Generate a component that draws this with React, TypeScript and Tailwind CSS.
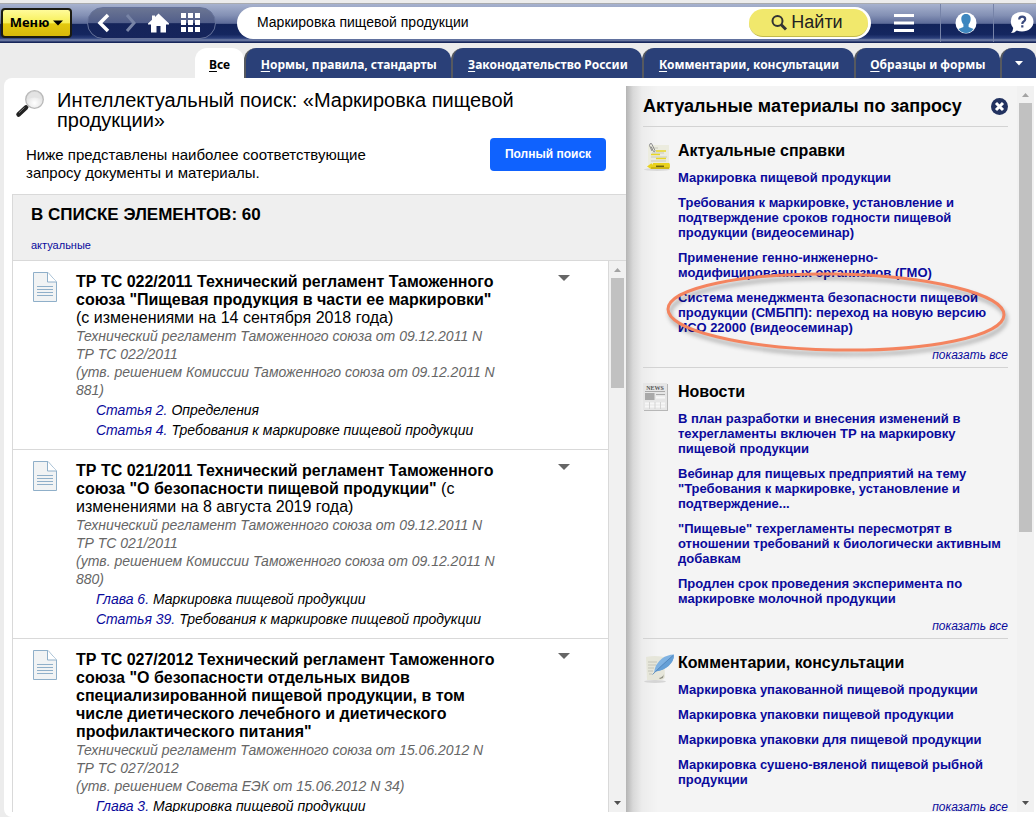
import { ReactNode } from "react";

type Doc = {
  title: string;
  note?: string;
  lines: string[];
  parts: { ref: string; text: string }[];
};

const docs: Doc[] = [
  {
    title: 'ТР ТС 022/2011 Технический регламент Таможенного союза "Пищевая продукция в части ее маркировки"',
    note: "(с изменениями на 14 сентября 2018 года)",
    lines: [
      "Технический регламент Таможенного союза от 09.12.2011 N ТР ТС 022/2011",
      "(утв. решением Комиссии Таможенного союза от 09.12.2011 N 881)",
    ],
    parts: [
      { ref: "Статья 2.", text: "Определения" },
      { ref: "Статья 4.", text: "Требования к маркировке пищевой продукции" },
    ],
  },
  {
    title: 'ТР ТС 021/2011 Технический регламент Таможенного союза "О безопасности пищевой продукции"',
    note: "(с изменениями на 8 августа 2019 года)",
    lines: [
      "Технический регламент Таможенного союза от 09.12.2011 N ТР ТС 021/2011",
      "(утв. решением Комиссии Таможенного союза от 09.12.2011 N 880)",
    ],
    parts: [
      { ref: "Глава 6.", text: "Маркировка пищевой продукции" },
      { ref: "Статья 39.", text: "Требования к маркировке пищевой продукции" },
    ],
  },
  {
    title:
      'ТР ТС 027/2012 Технический регламент Таможенного союза "О безопасности отдельных видов специализированной пищевой продукции, в том числе диетического лечебного и диетического профилактического питания"',
    lines: [
      "Технический регламент Таможенного союза от 15.06.2012 N ТР ТС 027/2012",
      "(утв. решением Совета ЕЭК от 15.06.2012 N 34)",
    ],
    parts: [{ ref: "Глава 3.", text: "Маркировка пищевой продукции" }],
  },
];

const tabs = [
  { first: "Н", rest: "ормы, правила, стандарты" },
  { first: "З", rest: "аконодательство России" },
  { first: "К", rest: "омментарии, консультации" },
  { first: "О", rest: "бразцы и формы" },
];

function MagnifierPicture() {
  return (
    <svg width="30" height="30" viewBox="0 0 30 30" aria-hidden="true">
      <defs>
        <radialGradient id="lens" cx="0.5" cy="0.7" r="0.7">
          <stop offset="0" stopColor="#ffffff" />
          <stop offset="1" stopColor="#d6d6d6" />
        </radialGradient>
      </defs>
      <path d="M14 15 10.500 18" stroke="#aaa" strokeWidth="3" />
      <path d="M11 17.500 3.500 24.500" stroke="#222" strokeWidth="4.500" strokeLinecap="round" />
      <path d="M9.500 17.500 4 22.800" stroke="#777" strokeWidth="1" />
      <circle cx="19.500" cy="9.500" r="8.800" fill="url(#lens)" stroke="#b9b9b9" strokeWidth="1.300" />
      <path d="M12.500 9a7 7 0 0 1 14 0q-7-3-14 0" fill="#e3e3e3" />
    </svg>
  );
}

function DocIcon() {
  return (
    <svg width="24" height="30" viewBox="0 0 24 30" aria-hidden="true">
      <path d="M.5.500H15L23.500 10v19.500H.5z" fill="#f1f3f4" stroke="#8fafc9" />
      <path d="M14.500.5V10h9" fill="#fff" stroke="#8fafc9" />
      <path d="M4 14.500h16M4 17.500h16M4 20.500h16M4 23.500h16" stroke="#8fafc9" />
    </svg>
  );
}

function NotesIcon() {
  return (
    <svg width="28" height="30" viewBox="0 0 28 30" aria-hidden="true">
      <ellipse cx="14" cy="27.500" rx="13" ry="1.500" fill="#d9d9d9" />
      <path d="M5 3h21v20H5z" fill="#ececdf" />
      <path d="M8 6h7M8 15h16M8 19h15M9 11h12" stroke="#c9c9bd" />
      <path d="M13 9h10M8 12.500h9M13 16.500h10" stroke="#e8d526" strokeWidth="1.500" />
      <path d="M9 9 6.500 3.500Q6.500 1 8.500 1.500L12 8.500Q12 10.500 10.500 9.500L8 4.500" fill="none" stroke="#8c8c8c" />
      <path d="M4 24.500 8 21.500h1L10 23V21h16q1 0 1 3t-1 3H8z" fill="#e9d21e" />
      <path d="M8 26h18" stroke="#b39b0b" />
      <path d="M13 24.300h8" stroke="#6f6310" strokeWidth="1.500" />
    </svg>
  );
}

function NewsIcon() {
  return (
    <svg width="26" height="29" viewBox="0 0 26 29" aria-hidden="true">
      <path d="M1 1h24v27H1z" fill="#b7b7b7" />
      <path d="M0 0h24v27H0z" fill="#e6e6e6" />
      <text x="12" y="7" textAnchor="middle" fontSize="6" fontWeight="700" fontFamily="Liberation Serif, serif" fill="#555">
        NEWS
      </text>
      <path d="M2 8.500h20M13 11.500h9" stroke="#aaa" />
      <path d="M2 10h9.500v7H2z" fill="#a9a9a9" />
      <path d="M13 14.500h9M2 20.500h20M2 23.500h20" stroke="#f7f7f7" strokeWidth="2" />
      <path d="M6.500 19v7M12 19v7M17.500 19v7" stroke="#d3d3d3" />
    </svg>
  );
}

function QuillIcon() {
  return (
    <svg width="32" height="30" viewBox="0 0 32 30" aria-hidden="true">
      <ellipse cx="12" cy="27.500" rx="11" ry="1.500" fill="#d5d5d5" />
      <path d="M3 3q8-2 18 0l1 20q-1 3-4 3H4z" fill="#e6e6da" />
      <path d="M16 24q4-1 5-4l-1 4-3 1z" fill="#8f8f83" />
      <path d="M5 8h9M5 11h8M5 14h6M5 17h5M6 20h3" stroke="#c4c4b8" />
      <path d="M11 18.500Q12 10 19 4.500 24 .8 31 .5 31 7 25.500 12 20 16.500 12.500 17.500z" fill="#7fb2e2" />
      <path d="M12.500 17.500Q21 9.500 31 .5 31 7 25.500 12 20 16.500 12.500 17.500z" fill="#659fd6" />
      <path d="M9.500 20.500Q18 12 30 1.500" fill="none" stroke="#4a7fb6" strokeWidth="0.800" />
    </svg>
  );
}

function ScrollTrack({ side, thumb }: { side: string; thumb: string }) {
  return (
    <div className={`flex shrink-0 flex-col items-center bg-[#f1f1f1] ${side}`} aria-hidden="true">
      <svg className="shrink-0" width="17" height="17" viewBox="0 0 17 17">
        <path d="M5 11h7L8.500 7z" fill="#a3a3a3" />
      </svg>
      <div className="flex w-full grow flex-col items-center">
        <div className={`w-[13px] bg-[#c1c1c1] ${thumb}`} />
      </div>
      <svg className="shrink-0" width="17" height="17" viewBox="0 0 17 17">
        <path d="M5 6h7L8.500 10z" fill="#505050" />
      </svg>
    </div>
  );
}

function Section({ icon, title, children }: { icon: ReactNode; title: string; children: ReactNode }) {
  return (
    <section className="flex border-t border-[#d3d3d3] pb-1 pt-[14px]">
      <div className="w-[35px] shrink-0 pt-px">{icon}</div>
      <div className="min-w-0 flex-1">
        <h3 className="text-[16px] font-bold leading-5">{title}</h3>
        <ul className="mt-[9px] flex flex-col gap-[10px] text-[13px] font-bold leading-[15px] text-[#0a0a9c]">{children}</ul>
        <p className="mt-[13px] text-right text-[12px] italic leading-[15px] text-[#0a0a9c]">
          <a href="#all">показать все</a>
        </p>
      </div>
    </section>
  );
}

function Item({ text, children }: { text: string; children?: ReactNode }) {
  return (
    <li className="relative">
      <a href="#item">{text}</a>
      {children}
    </li>
  );
}

export default function App() {
  return (
    <div className="flex h-screen flex-col overflow-hidden bg-[#ececec] font-['Liberation_Sans',Arial,sans-serif] text-black">
      <header className="mt-[3px] flex h-10 shrink-0 items-center border-b border-t border-b-[#17265a] border-t-[#a9abae] bg-[linear-gradient(#a7b2cf_0,#8390b4_30%,#5c6a98_51%,#12235a_53%,#14265f_80%,#2b3f7b_90%,#7a88ae_95%,#1d2d62_100%)]">
        <button className="ml-px flex h-[30px] w-[71px] shrink-0 items-center justify-center gap-1 rounded border-2 border-[#1b1b12] bg-[linear-gradient(#fffb9a,#f7ef55_50%,#e3c90f_53%,#d8b90a)] font-['Noto_Sans',sans-serif] text-[13px] font-bold">
          Меню
          <svg width="10" height="6" viewBox="0 0 10 6" aria-hidden="true">
            <path d="M0 .5h10L5 5.500z" />
          </svg>
        </button>
        <nav className="ml-[15px] flex h-8 w-[129px] shrink-0 items-center rounded-full border border-[#66739b] bg-[linear-gradient(#6b7593,#515e8a_50%,#15245a_52%,#16255c)]">
          <button aria-label="Назад" className="ml-2">
            <svg width="16" height="20" viewBox="0 0 16 20" fill="none" stroke="#fff" strokeWidth="3.500">
              <path d="M12 2 4 10l8 8" />
            </svg>
          </button>
          <button aria-label="Вперёд" className="ml-3">
            <svg width="14" height="20" viewBox="0 0 14 20" fill="none" stroke="#7884a6" strokeWidth="3">
              <path d="m3 2 7 8-7 8" />
            </svg>
          </button>
          <button aria-label="Главная" className="ml-[10px]">
            <svg width="21" height="20" viewBox="0 0 21 20" fill="#fff">
              <path d="M10.500.5 21 10.500v1h-3v8h-5.500V13h-4v6.500H3v-8H0v-1L4 6.700V2.500h3v1.400z" />
            </svg>
          </button>
          <button aria-label="Приложения" className="ml-3">
            <svg width="20" height="20" viewBox="0 0 20 20" fill="#fff">
              <path d="M0 0h5v5H0zM7 0h5v5H7zM14 0h5v5h-5zM0 7h5v5H0zM7 7h5v5H7zM14 7h5v5h-5zM0 14h5v5H0zM7 14h5v5H7zM14 14h5v5h-5z" />
            </svg>
          </button>
        </nav>
        <form className="ml-[21px] flex h-8 min-w-0 flex-1 items-center rounded-full bg-white pr-[3px]" onSubmit={(e) => e.preventDefault()}>
          <input
            aria-label="Поиск"
            defaultValue="Маркировка пищевой продукции"
            className="h-full min-w-0 flex-1 rounded-full bg-transparent pb-0.5 pl-5 text-[14px] outline-none"
          />
          <button className="flex h-7 w-[119px] items-center justify-center gap-[3px] rounded-full border-b border-[#c3b94c] bg-[#f1e86c] pr-1 text-[18px] text-[#222]">
            <svg width="18" height="18" viewBox="0 0 18 18" fill="none" stroke="#333" aria-hidden="true">
              <circle cx="7.500" cy="7" r="5" strokeWidth="2" />
              <path d="m11 10.500 5 5" strokeWidth="3" />
            </svg>
            Найти
          </button>
        </form>
        <button aria-label="Список" className="flex h-full w-[69px] items-center justify-center pr-1">
          <svg width="20" height="18" viewBox="0 0 20 18" stroke="#fff" strokeWidth="3">
            <path d="M0 1.500h20M0 9h20M0 16.500h20" />
          </svg>
        </button>
        <button aria-label="Профиль" className="flex h-full w-[54px] items-center justify-center border-x border-[#7683a8] pr-[3px]">
          <svg width="22" height="22" viewBox="0 0 22 22">
            <circle cx="11" cy="11" r="10.500" fill="#fff" />
            <path d="M11 2c3.500 0 5 2.500 4.600 6-.3 2.500-1.300 3.500-2 4.500v2.500l5 2q-3 4-7.600 4t-7.600-4l5-2V12.500c-.7-1-1.700-2-2-4.500C6 4.500 7.500 2 11 2z" fill="#3d86bf" />
          </svg>
        </button>
        <button aria-label="Справка" className="flex h-full w-[42px] items-center justify-center pl-3">
          <svg width="25" height="22" viewBox="0 0 24 22">
            <path d="M12.500 0C19 0 24 4 24 9.700s-5 9.800-11.500 9.800c-2 0-3.700-.4-5.200-1.100Q5 21 1.500 21 3.500 19 3.700 16 1.300 13.500 1.300 9.700 1.300 0 12.500 0z" fill="#fff" />
            <path d="M9.700 7.500q0-2.800 3-2.800t3 2.600q0 1.300-1.500 2.200t-1.400 2.500M12.800 13.300v2.200" fill="none" stroke="#3a4a7e" strokeWidth="2.200" />
          </svg>
        </button>
      </header>

      <div className="mt-[5px] flex h-[30px] shrink-0 items-stretch overflow-hidden pl-[195px] font-['Noto_Sans',sans-serif] text-[12px] font-bold">
        <a href="#all" className="flex items-center rounded-t-[12px] bg-white px-[14px] pt-[3px]">
          <span>
            <u className="underline-offset-2">В</u>се
          </span>
        </a>
        {tabs.map((t) => (
          <a
            key={t.first}
            href="#tab"
            className="flex flex-auto items-center justify-center whitespace-nowrap rounded-t-[12px] border-l-2 border-[#56595f] bg-[#2a4078] pt-[3px] text-white"
          >
            <span>
              <u className="underline-offset-2">{t.first}</u>
              {t.rest}
            </span>
          </a>
        ))}
        <button aria-label="Ещё" className="flex w-9 shrink-0 items-center justify-center rounded-t-[12px] border-l-2 border-[#56595f] bg-[#2a4078]">
          <svg width="8" height="5" viewBox="0 0 8 5" fill="#fff">
            <path d="M0 0h8L4 4.500z" />
          </svg>
        </button>
      </div>

      <div className="ml-1 flex min-h-0 flex-1 rounded-l-lg bg-white pb-[5px] pr-[2px]">
        <main className="flex min-w-0 flex-1 flex-col pl-2">
          <div className="flex pt-3">
            <div className="w-[45px] shrink-0 pl-[3px]">
              <MagnifierPicture />
            </div>
            <h1 className="pr-24 text-[20px] leading-5">Интеллектуальный поиск: «Маркировка пищевой продукции»</h1>
          </div>
          <div className="mb-3 mt-2 flex items-start justify-between pl-[14px] pr-5">
            <p className="max-w-[360px] pt-2 text-[15px] leading-[18px]">
              Ниже представлены наиболее соответствующие запросу документы и материалы.
            </p>
            <button className="mb-[11px] h-[33px] w-[116px] rounded bg-[#0f62fe] pb-0.5 text-[12px] font-bold text-white">Полный поиск</button>
          </div>
          <section className="flex min-h-0 flex-1 flex-col border-l border-t border-[#d9d9d9]">
            <div className="h-[66px] shrink-0 border-b border-[#d9d9d9] bg-[#efefef] pl-[18px] pt-[10px]">
              <h2 className="text-[17px] font-bold leading-5">В СПИСКЕ ЭЛЕМЕНТОВ: 60</h2>
              <a href="#actual" className="mt-[13px] block text-[11px] leading-[14px] text-[#0a0a9c]">
                актуальные
              </a>
            </div>
            <div className="flex min-h-0 flex-1">
              <ul className="min-w-0 flex-1 overflow-hidden">
                {docs.map((d) => (
                  <li key={d.title} className="flex border-b border-[#d9d9d9] pb-[9px] pl-5 pt-[11px]">
                    <div className="w-[43px] shrink-0">
                      <DocIcon />
                    </div>
                    <div className="min-w-0 flex-1 pt-px">
                      <h3 className="text-[16px] leading-[18px]">
                        <b>{d.title}</b> {d.note}
                      </h3>
                      {d.lines.map((l) => (
                        <p key={l} className="text-[14px] italic leading-[18px] text-[#666]">
                          {l}
                        </p>
                      ))}
                      <div className="mt-px pl-5 text-[14px] italic leading-5">
                        {d.parts.map((p) => (
                          <p key={p.ref}>
                            <a href="#part" className="text-[#0a0a9c]">
                              {p.ref}
                            </a>{" "}
                            {p.text}
                          </p>
                        ))}
                      </div>
                    </div>
                    <button aria-label="Действия" className="ml-14 mr-[38px] h-3 w-3 shrink-0">
                      <svg width="12" height="12" viewBox="0 0 12 12" fill="#666">
                        <path d="M0 3h12L6 9z" />
                      </svg>
                    </button>
                  </li>
                ))}
              </ul>
              <ScrollTrack side="w-[18px] border-l border-[#d9d9d9]" thumb="h-[110px]" />
            </div>
          </section>
        </main>

        <aside className="mt-2 flex w-[408px] shrink-0 overflow-hidden bg-[#f4f4f4] bg-[linear-gradient(90deg,#b4b4b4_0,#d8d8d8_7px,#ececec_16px,#f4f4f4_32px)]">
          <div className="min-w-0 flex-1 overflow-hidden pl-[17px] pr-[9px]">
            <div className="flex h-10 items-center justify-between">
              <h2 className="text-[18px] font-bold">Актуальные материалы по запросу</h2>
              <button aria-label="Закрыть">
                <svg width="17" height="17" viewBox="0 0 17 17">
                  <circle cx="8.500" cy="8.500" r="8.500" fill="#223260" />
                  <path d="m5 5 7 7m0-7-7 7" stroke="#fff" strokeWidth="3" />
                </svg>
              </button>
            </div>
            <Section icon={<NotesIcon />} title="Актуальные справки">
              <Item text="Маркировка пищевой продукции" />
              <Item text="Требования к маркировке, установление и подтверждение сроков годности пищевой продукции (видеосеминар)" />
              <Item text="Применение генно-инженерно-модифицированных организмов (ГМО)" />
              <Item text="Система менеджмента безопасности пищевой продукции (СМБПП): переход на новую версию ИСО 22000 (видеосеминар)">
                <svg className="pointer-events-none absolute -left-4 -top-6 overflow-visible" width="346" height="90" viewBox="0 0 346 90" fill="none" aria-hidden="true">
                  <g transform="rotate(1 174 46)">
                    <ellipse cx="176" cy="50" rx="168" ry="38" stroke="#000" strokeOpacity="0.35" strokeWidth="3" className="blur-[2px]" />
                    <ellipse cx="174" cy="46" rx="168" ry="38" stroke="#f4845f" strokeWidth="3" />
                  </g>
                </svg>
              </Item>
            </Section>
            <Section icon={<NewsIcon />} title="Новости">
              <Item text="В план разработки и внесения изменений в техрегламенты включен ТР на маркировку пищевой продукции" />
              <Item text={'Вебинар для пищевых предприятий на тему "Требования к маркировке, установление и подтверждение...'} />
              <Item text={'"Пищевые" техрегламенты пересмотрят в отношении требований к биологически активным добавкам'} />
              <Item text="Продлен срок проведения эксперимента по маркировке молочной продукции" />
            </Section>
            <Section icon={<QuillIcon />} title="Комментарии, консультации">
              <Item text="Маркировка упакованной пищевой продукции" />
              <Item text="Маркировка упаковки пищевой продукции" />
              <Item text="Маркировка упаковки для пищевой продукции" />
              <Item text="Маркировка сушено-вяленой пищевой рыбной продукции" />
            </Section>
          </div>
          <ScrollTrack side="w-[17px]" thumb="h-[62%]" />
        </aside>
      </div>
    </div>
  );
}
